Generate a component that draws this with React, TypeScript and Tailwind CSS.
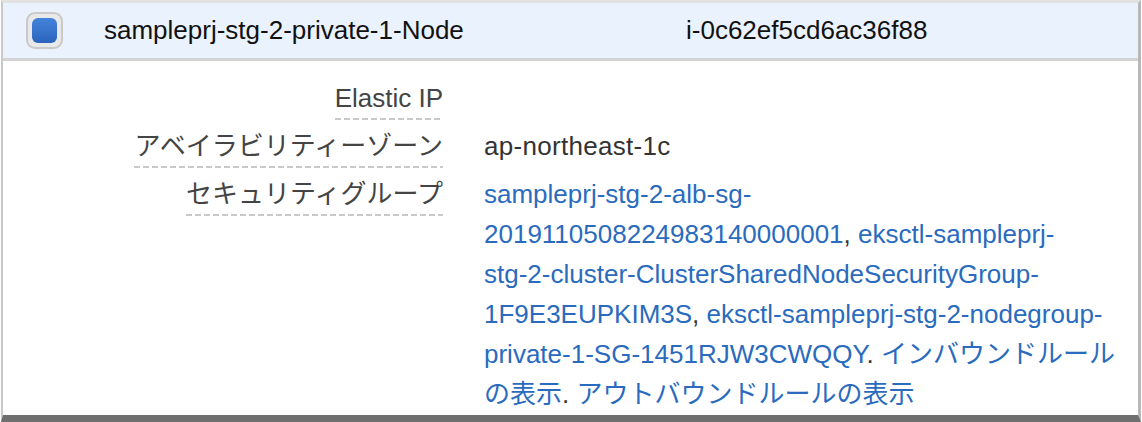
import React from "react";

const Dash = () => (
  <div className="h-[2px] w-full bg-[repeating-linear-gradient(to_right,#c9c9c9_0_6px,transparent_6px_9px)]" />
);

function Label({ children }: { children: React.ReactNode }) {
  return (
    <div className="flex justify-end">
      <div className="inline-flex flex-col items-end">
        <span className="h-[40px] leading-[40px] whitespace-nowrap">{children}</span>
        <Dash />
      </div>
    </div>
  );
}

const L = ({ children }: { children: React.ReactNode }) => (
  <a className="text-[#2a6bbd] cursor-pointer">{children}</a>
);

export default function App() {
  return (
    <div
      className="w-[1142px] h-[422px] bg-white overflow-hidden"
      style={{ fontFamily: '"Liberation Sans", Arial, "Noto Sans CJK JP", sans-serif' }}
    >
      <div className="ml-[1px] w-[1140px] h-[422px] flex flex-col border-l-[2px] border-r-[3px] border-l-[#c9c9c9] border-r-[#b8b8b8] border-t-[3px] border-t-[#e2e2e2] border-b-[7px] border-b-[#6f6f6f]">
        <div className="h-[55px] shrink-0 bg-[#eaf2fd] flex items-center border-b-[3px] border-b-[#d3d3d3] box-content">
          <div className="ml-[23px] shrink-0 w-[37px] h-[37px] rounded-[9px] bg-[#e9e9e9] border-2 border-[#c9c9c9] flex items-center justify-center">
            <div className="w-[25px] h-[25px] rounded-[6px] bg-gradient-to-b from-[#4484db] to-[#2b63bd]" />
          </div>
          <div className="ml-[41px] w-[582px] shrink-0 text-[26px] text-[#111]">sampleprj-stg-2-private-1-Node</div>
          <div className="text-[26px] text-[#111]">i-0c62ef5cd6ac36f88</div>
        </div>
        <div className="pt-[17px] grid grid-cols-[440px_632px] gap-x-[41px] text-[26px] content-start">
          <div className="text-[#444] mb-[6px]">
            <Label>Elastic IP</Label>
          </div>
          <div />
          <div className="text-[#444] mb-[6px]">
            <Label>アベイラビリティーゾーン</Label>
          </div>
          <div className="leading-[40px] text-[#333] tracking-[0.3px]">ap-northeast-1c</div>
          <div className="text-[#444]">
            <Label>セキュリティグループ</Label>
          </div>
          <div className="leading-[40px] text-[#333]">
            <L>sampleprj-stg-2-alb-sg-2019110508224983140000001</L>,{" "}
            <L>
              eksctl-sampleprj-
              <br />
              stg-2-cluster-ClusterSharedNodeSecurityGroup-1F9E3EUPKIM3S
            </L>
            ,{" "}
            <L>eksctl-sampleprj-stg-2-nodegroup-private-1-SG-1451RJW3CWQQY</L>.{" "}
            <L>インバウンドルールの表示</L>. <L>アウトバウンドルールの表示</L>
          </div>
        </div>
      </div>
    </div>
  );
}
